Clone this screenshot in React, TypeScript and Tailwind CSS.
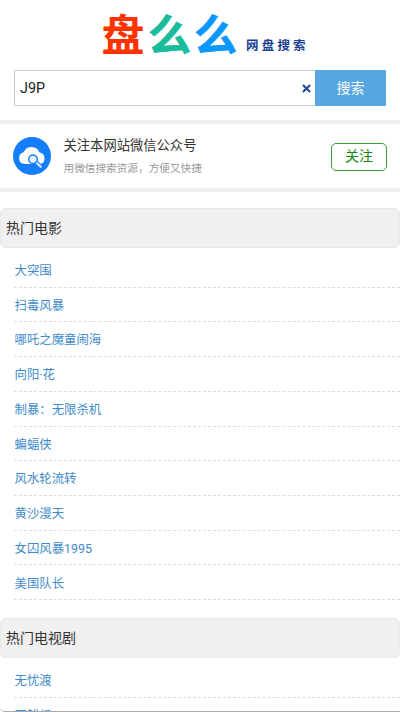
const movies = ["大突围", "扫毒风暴", "哪吒之魔童闹海", "向阳·花", "制暴：无限杀机", "蝙蝠侠", "风水轮流转", "黄沙漫天", "女囚风暴1995", "美国队长"];
const series = ["无忧渡", "正耕组"];

function Logo() {
    return (
        <div className="flex h-[70px] pl-[102px] font-bold leading-none">
            <div className="flex gap-[4px] pt-[15px] text-[43px]">
                <span className="-translate-x-[0.5px] text-[#ff3300]">盘</span>
                <span className="-translate-x-px text-[#1abc9c] [-webkit-text-stroke:0.8px_#1abc9c]">么</span>
                <span className="-translate-x-[2px] text-[#0a98ff] [-webkit-text-stroke:0.8px_#0a98ff]">么</span>
            </div>
            <div className="ml-[7px] pt-[40px] text-[12.5px] tracking-[3.2px] text-[#1c3f94]">网盘搜索</div>
        </div>
    );
}

function CloudIcon() {
    return (
        <svg viewBox="0 0 38 38" className="size-[38px] shrink-0">
            <circle cx="19" cy="19" r="19" fill="#147dfa" />
            <path d="M11.5 27a6 6 0 0 1-.8-11.8A8.5 8.5 0 0 1 26.5 15.5a5.9 5.9 0 0 1 .8 11.5z" fill="#fff" />
            <path d="m23.5 25.8 4.2 4" stroke="#147dfa" strokeWidth="4.4" strokeLinecap="round" />
            <path d="m23 25.3 4.7 4.5" stroke="#d8ebff" strokeWidth="2.2" strokeLinecap="round" />
            <circle cx="20" cy="22.3" r="4.3" fill="#e4f1ff" stroke="#147dfa" strokeWidth="1.5" />
        </svg>
    );
}

function Section({ title, items }: { title: string; items: string[] }) {
    return (
        <section className="mb-[18px]">
            <h2 className="flex h-10 items-center rounded-[5px] border border-[#e9e9e9] bg-[#f0f0f0] pl-[5px] text-[14px] text-[#333]">{title}</h2>
            <ul className="pl-[14px] pt-[5px]">
                {items.map((item) => (
                    <li key={item} className="flex h-[34.72px] items-center border-b border-dashed border-[#ddd] pl-[0.5px] pt-[3px] text-[12.4px] text-[#428bca]">
                        <a className="whitespace-nowrap">{item}</a>
                    </li>
                ))}
            </ul>
        </section>
    );
}

export default function App() {
    return (
        <div className="relative h-[712px] w-[400px] overflow-hidden bg-white font-[Roboto,'Noto_Sans_CJK_SC',sans-serif]">
            <Logo />
            <div className="mx-[14px] flex h-[36px]">
                <div className="flex flex-1 items-center justify-between border border-r-0 border-[#ccc] pl-[5px] pr-[4px] text-[14.3px] text-[#222]">
                    <span className="pt-[2px]">J9P</span>
                    <svg viewBox="0 0 10 10" className="size-[9px]">
                        <path d="m1 1 8 8M9 1 1 9" stroke="#254a96" strokeWidth="2.4" />
                    </svg>
                </div>
                <button className="w-[71px] bg-[#56a6e2] text-[14px] text-white">搜索</button>
            </div>
            <div className="mb-4 mt-[14px] flex h-[72px] items-center border-y-4 border-[#f0f0f0] pl-[13px] pr-[13px]">
                <CloudIcon />
                <div className="ml-[12.5px] flex-1 pt-[2px]">
                    <div className="text-[13.3px] leading-[22px] text-[#333]">关注本网站微信公众号</div>
                    <div className="mt-[2px] text-[10.65px] leading-[20px] text-[#999]">用微信搜索资源，方便又快捷</div>
                </div>
                <button className="mt-px h-[28px] w-[56px] rounded-[5px] border border-[#3a9f3a] text-[14px] text-[#118811]">关注</button>
            </div>
            <Section title="热门电影" items={movies} />
            <Section title="热门电视剧" items={series} />
            <div className="absolute inset-x-0 bottom-0 h-2 rounded-bl-[5px] border-b border-[#aaa]" />
        </div>
    );
}
